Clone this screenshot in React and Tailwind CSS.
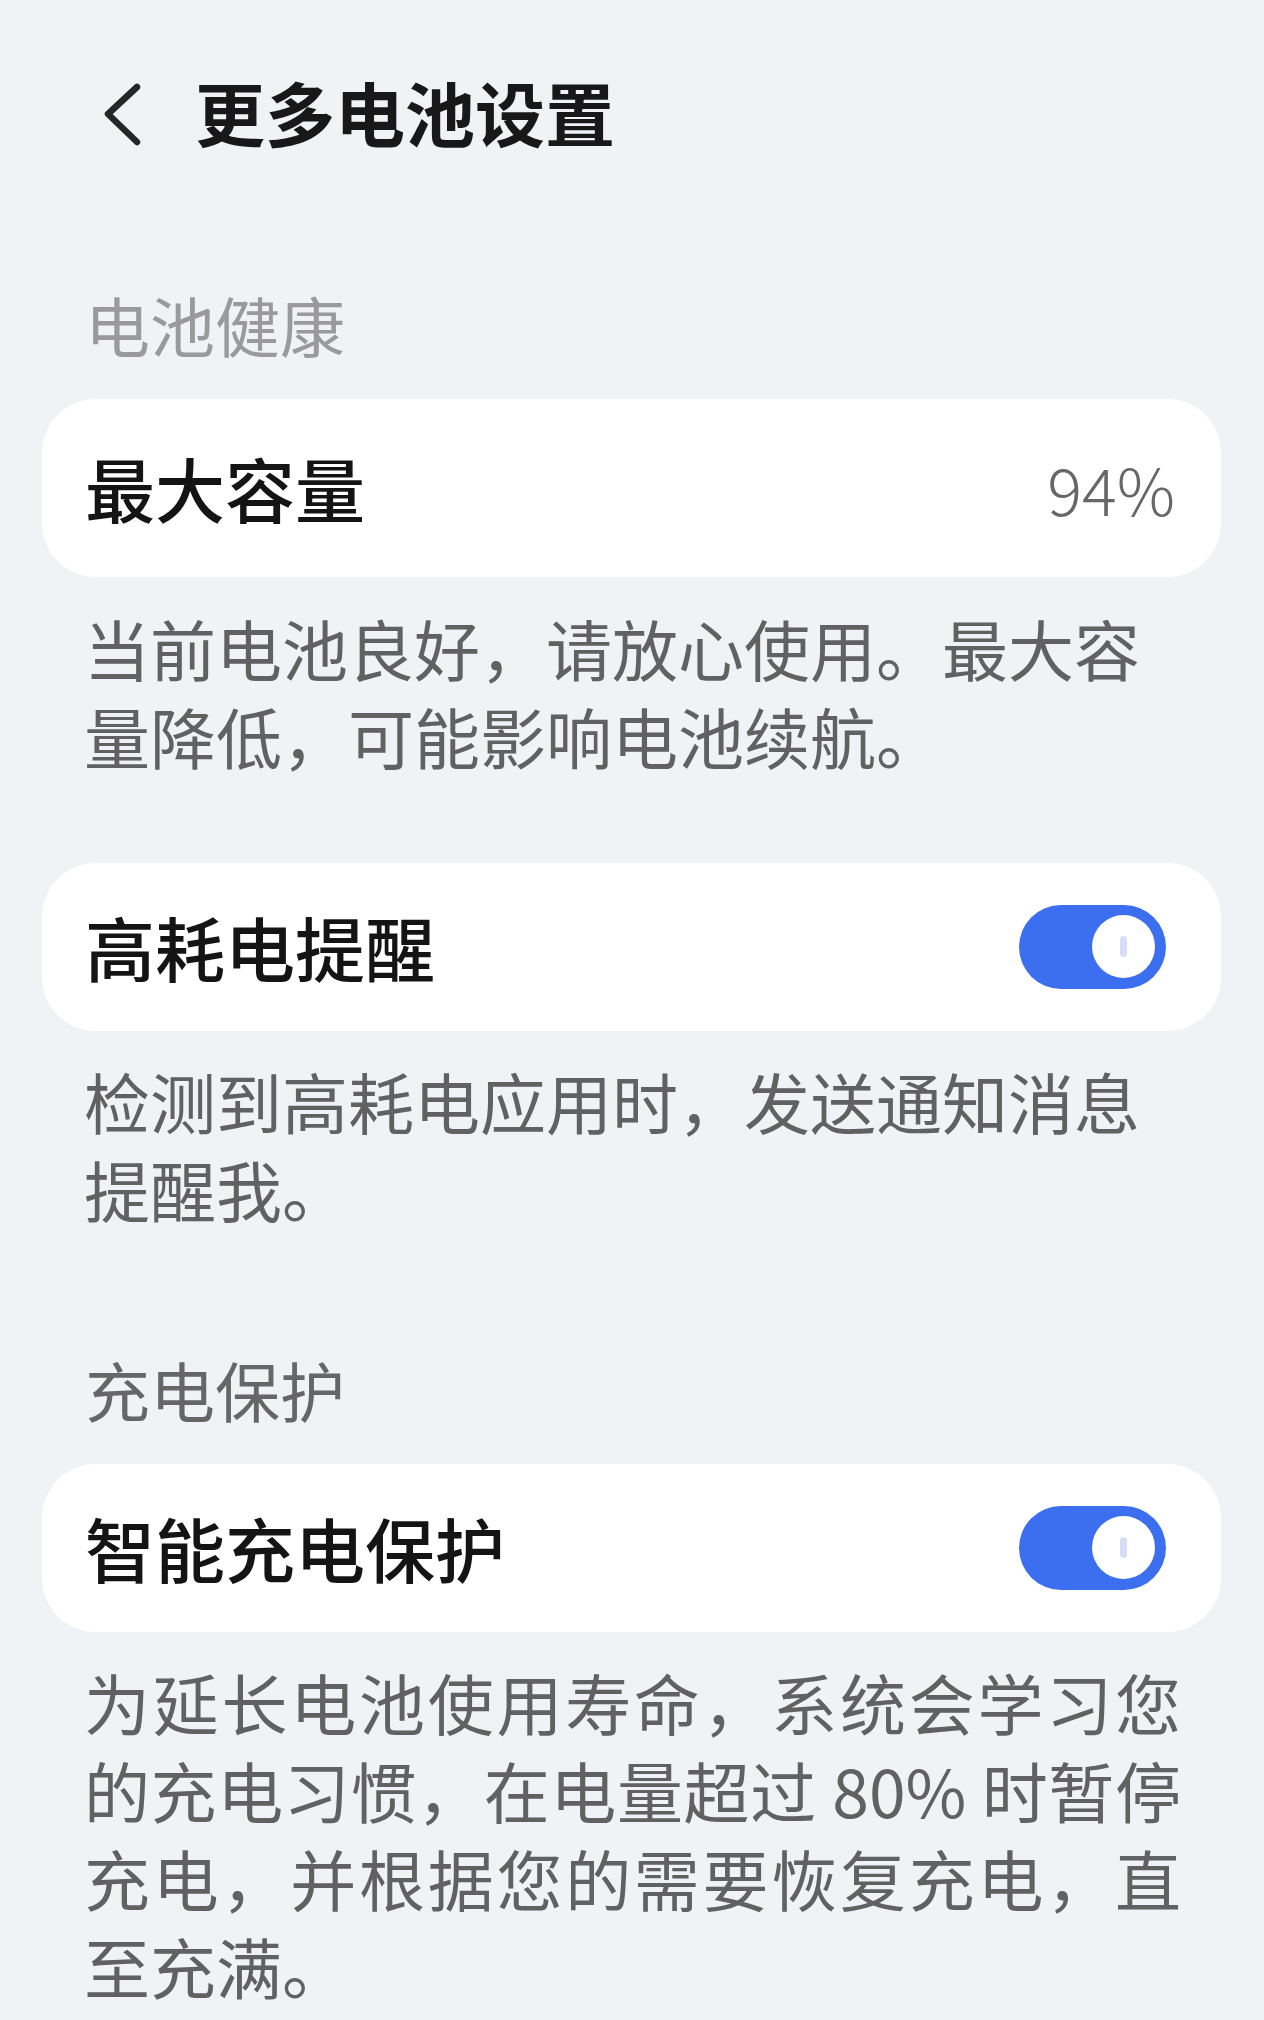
import React from "react";

const FONT = { fontFamily: '"Noto Sans CJK SC", "Noto Sans", sans-serif' };

function Toggle() {
  return (
    <div className="relative w-[147px] h-[84px] rounded-full bg-[#3b6ff0] shrink-0">
      <div className="absolute right-[11px] top-[10px] w-[63px] h-[63px] rounded-full bg-white flex items-center justify-center">
        <div className="w-[7px] h-[21px] rounded-full bg-[#d5def4]" />
      </div>
    </div>
  );
}

function Card({ title, right, tall }) {
  return (
    <div
      className={`flex items-center justify-between bg-white rounded-[54px] pl-[43px] pr-[55px] ${
        tall ? "h-[178px]" : "h-[168px]"
      }`}
    >
      <span className="text-[70px] leading-[90px] font-medium text-[#141414]">{title}</span>
      {right}
    </div>
  );
}

export default function App() {
  return (
    <div className="w-full min-h-[2020px] bg-[#f1f2f6] overflow-hidden" style={FONT}>
      {/* Header */}
      <div className="flex items-center h-[100px] mt-[62px]">
        <svg width="44" height="66" viewBox="0 0 44 66" className="ml-[100px] mt-[6px] shrink-0">
          <polyline
            points="37,5 8,32 37,60"
            fill="none"
            stroke="#262626"
            strokeWidth="6.5"
            strokeLinecap="round"
            strokeLinejoin="round"
          />
        </svg>
        <h1 className="ml-[51px] text-[70px] leading-[100px] font-bold text-[#181818]">更多电池设置</h1>
      </div>

      <div className="pl-[42px] pr-[43px]">
        {/* Section: 电池健康 */}
        <div className="mt-[118px] pl-[43px] text-[65px] leading-[88px] text-[#9a9a9a]">电池健康</div>

        <div className="mt-[31px]">
          <Card
            tall
            title="最大容量"
            right={<span className="text-[65px] leading-[90px] font-light text-[#676767] -mr-[9px]">94%</span>}
          />
        </div>

        <p className="mt-[26px] pl-[42px] pr-[43px] text-[66px] leading-[88px] text-[#616161]">
          当前电池良好，请放心使用。最大容量降低，可能影响电池续航。
        </p>

        <div className="mt-[84px]">
          <Card title="高耗电提醒" right={<Toggle />} />
        </div>

        <p className="mt-[25px] pl-[42px] pr-[43px] text-[66px] leading-[88px] text-[#616161]">
          检测到高耗电应用时，发送通知消息提醒我。
        </p>

        {/* Section: 充电保护 */}
        <div className="mt-[113px] pl-[43px] text-[65px] leading-[88px] text-[#666666]">充电保护</div>

        <div className="mt-[31px]">
          <Card title="智能充电保护" right={<Toggle />} />
        </div>

        <div className="mt-[25px] pl-[42px] pr-[40px] text-[66px] leading-[88px] text-[#616161]">
          <div className="text-justify [text-align-last:justify]">为延长电池使用寿命，系统会学习您</div>
          <div className="text-justify [text-align-last:justify]">的充电习惯，在电量超过 80% 时暂停</div>
          <div className="text-justify [text-align-last:justify]">充电，并根据您的需要恢复充电，直</div>
          <div>至充满。</div>
        </div>
      </div>
    </div>
  );
}
